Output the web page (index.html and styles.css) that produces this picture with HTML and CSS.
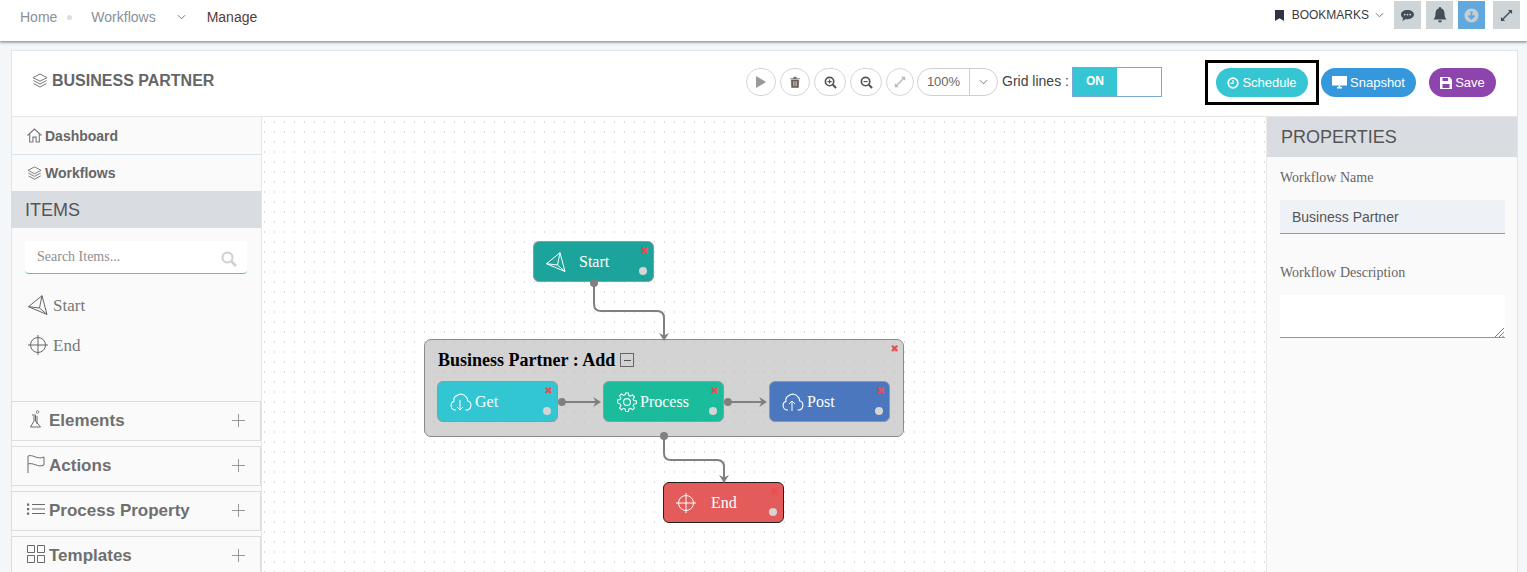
FILE: index.html
```html
<!DOCTYPE html>
<html lang="en">
<head>
<meta charset="utf-8">
<title>Business Partner</title>
<link rel="stylesheet" href="styles.css">
</head>
<body>
<svg class="defs" width="0" height="0">
  <defs>
    <symbol id="layers" viewBox="0 0 16 16"><path d="M8 1 15 4.6 8 8.2 1 4.6ZM1.500 7.600 8 11 14.500 7.600M1.500 10.600 8 14 14.500 10.600" fill="none" stroke="currentColor" stroke-width="1"/></symbol>
    <symbol id="plane" viewBox="0 0 20 20"><path d="M.5 11.700 14 .7 19 19.500ZM.5 11.700 11.500 13 19 19.500M11.500 13 14 .7" fill="none" stroke="currentColor" stroke-width="1"/></symbol>
    <symbol id="target" viewBox="0 0 20 20"><circle cx="10" cy="10" r="7.500" fill="none" stroke="currentColor"/><path d="M10 0V20M0 10H20" stroke="currentColor" fill="none"/></symbol>
    <symbol id="cloud" viewBox="0 0 22 20"><path d="M6 18H5.500A4.500 4.500 0 0 1 4 9.300 5 5 0 0 1 7 3.500 6 6 0 0 1 16 5a4 4 0 0 1 1.500 3.800A4.700 4.700 0 0 1 16 18h-.5" fill="none" stroke="currentColor" stroke-width="1.100"/></symbol>
  </defs>
</svg>

<header class="topbar">
  <nav class="crumbs">
    <a class="crumb">Home</a><span class="dot"></span>
    <a class="crumb">Workflows</a>
    <svg class="chev" viewBox="0 0 10 6"><path d="M1 1 5 5 9 1" fill="none" stroke="currentColor"/></svg>
    <a class="crumb active">Manage</a>
  </nav>
  <div class="top-tools">
    <svg class="bookmark" viewBox="0 0 10 12"><path d="M0 0H10V12L5 9 0 12Z" fill="currentColor"/></svg>
    <span class="bm-label">BOOKMARKS</span>
    <svg class="chev bm-chev" viewBox="0 0 10 6"><path d="M1 1 5 5 9 1" fill="none" stroke="currentColor"/></svg>
    <button class="tile"><svg viewBox="0 0 16 14" width="15" height="13"><path d="M8 1C3.800 1 1 3.300 1 6c0 1.500.8 2.800 2.200 3.700L2.500 13l3.700-2.200c.6.100 1.200.2 1.800.2 4.200 0 7-2.300 7-5S12.200 1 8 1Z" fill="#454e55"/><circle cx="5" cy="6" r="1" fill="#cdd5d8"/><circle cx="8" cy="6" r="1" fill="#cdd5d8"/><circle cx="11" cy="6" r="1" fill="#cdd5d8"/></svg></button>
    <button class="tile"><svg viewBox="0 0 14 16" width="14" height="16"><path d="M7 0a1 1 0 0 1 1 1.200C10.500 1.800 11.500 4 11.500 6.500c0 3 .9 4.700 2.200 6H.3c1.300-1.300 2.200-3 2.200-6C2.500 4 3.500 1.800 6 1.200A1 1 0 0 1 7 0ZM5 13.500h4a2 2 0 0 1-4 0Z" fill="#454e55"/></svg></button>
    <button class="tile tile-blue"><svg viewBox="0 0 16 16" width="15" height="15"><circle cx="8" cy="8" r="7.500" fill="#c3ced6"/><path d="M8 3.500V11M4.800 8 8 11.300 11.200 8" fill="none" stroke="#62a8dd" stroke-width="2"/></svg></button>
    <button class="tile"><svg viewBox="0 0 14 14" width="13" height="13"><path d="M8.500 1H13V5.500L11.300 3.800 3.800 11.300 5.500 13H1V8.500L2.700 10.200 10.200 2.700Z" fill="#454e55"/></svg></button>
  </div>
</header>

<main class="card">
  <section class="head">
    <h1 class="title"><svg class="title-ico"><use href="#layers"/></svg>BUSINESS PARTNER</h1>
    <div class="toolbar">
      <button class="round"><svg viewBox="0 0 10 12" width="10" height="12"><path d="M0 0 10 6 0 12Z" fill="#999"/></svg></button>
      <button class="round"><svg viewBox="0 0 12 13" width="10" height="12"><path d="M0 2.500H12M4 2.500 4.700.7H7.300L8 2.500M1.500 4H10.500L10 13H2Z" fill="#6a5e5a" stroke="#6a5e5a" stroke-width=".8"/><path d="M4.300 5.500V11.500M6 5.500V11.500M7.700 5.500V11.500" stroke="#eee" stroke-width=".7"/></svg></button>
      <button class="round wide"><svg viewBox="0 0 14 14" width="13" height="13"><circle cx="6" cy="6" r="4.500" fill="none" stroke="#5a5350" stroke-width="1.800"/><path d="M9.500 9.500 13 13" stroke="#5a5350" stroke-width="2.200"/><path d="M3.800 6H8.200M6 3.800V8.200" stroke="#5a5350" stroke-width="1.200"/></svg></button>
      <button class="round wide"><svg viewBox="0 0 14 14" width="13" height="13"><circle cx="6" cy="6" r="4.500" fill="none" stroke="#5a5350" stroke-width="1.800"/><path d="M9.500 9.500 13 13" stroke="#5a5350" stroke-width="2.200"/><path d="M3.800 6H8.200" stroke="#5a5350" stroke-width="1.200"/></svg></button>
      <button class="round narrow"><svg viewBox="0 0 14 14" width="12" height="12"><path d="M8.500 1H13V5.500L11.300 3.800 3.800 11.300 5.500 13H1V8.500L2.700 10.200 10.200 2.700Z" fill="#b5b5b5"/></svg></button>
      <div class="zoom"><span class="zoom-val">100%</span><span class="zoom-arrow"><svg class="chev" viewBox="0 0 10 6"><path d="M1 1 5 5 9 1" fill="none" stroke="currentColor"/></svg></span></div>
      <span class="grid-label">Grid lines :</span>
      <div class="switch"><span class="switch-on">ON</span></div>
    </div>
    <div class="actions">
      <div class="highlight"><button class="pill pill-teal"><svg viewBox="0 0 12 12" width="12" height="12"><circle cx="6" cy="6" r="4.800" fill="none" stroke="#fff" stroke-width="1.800"/><path d="M6 3V6.300H3.500" fill="none" stroke="#fff" stroke-width="1.200"/></svg>Schedule</button></div>
      <button class="pill pill-blue"><svg viewBox="0 0 15 13" width="15" height="13"><path d="M0 0H15V9.500H0ZM5 11H10V12.500H5Z" fill="#fff"/><path d="M6.500 9.500H8.500V11H6.500Z" fill="#fff"/></svg>Snapshot</button>
      <button class="pill pill-purple"><svg viewBox="0 0 12 12" width="12" height="12"><path d="M0 0H9.500L12 2.500V12H0Z" fill="#fff"/><path d="M2.500 1H8V4H2.500ZM2.500 7H9.500V11H2.500Z" fill="#8e44ad"/></svg>Save</button>
    </div>
  </section>

  <section class="body">
    <aside class="left">
      <a class="side-link"><svg viewBox="0 0 14 14" class="side-ico"><path d="M.5 7 7 1 13.500 7M2.500 5.500V13H5.500V8.500H8.500V13H11.500V5.500" fill="none" stroke="currentColor"/></svg>Dashboard</a>
      <a class="side-link"><svg class="side-ico"><use href="#layers"/></svg>Workflows</a>
      <h2 class="band band-items">ITEMS</h2>
      <div class="search">
        <span class="search-ph">Search Items...</span>
        <svg viewBox="0 0 16 16" width="16" height="16"><circle cx="6.500" cy="6.500" r="5" fill="none" stroke="#cfcfcf" stroke-width="2"/><path d="M10.500 10.500 15 15" stroke="#cfcfcf" stroke-width="2.500"/></svg>
      </div>
      <div class="item"><svg class="item-ico"><use href="#plane"/></svg>Start</div>
      <div class="item"><svg class="item-ico"><use href="#target"/></svg>End</div>
      <div class="spacer"></div>
      <div class="acc"><svg class="acc-ico" viewBox="0 0 14 18"><circle cx="8.500" cy="2" r="1.300" fill="none" stroke="currentColor" stroke-width=".8"/><path d="M3 5H6.500V11L11.500 17H1.500L5 11V6M8 6V14" fill="none" stroke="currentColor"/></svg><span>Elements</span><svg class="plus" viewBox="0 0 13 13"><path d="M6.500 0V13M0 6.500H13" stroke="currentColor" fill="none"/></svg></div>
      <div class="acc"><svg class="acc-ico" viewBox="0 0 18 18"><path d="M1 18V1C6 -1 10 5 17 2V10C11 13 6 7 1 9" fill="none" stroke="currentColor"/></svg><span>Actions</span><svg class="plus" viewBox="0 0 13 13"><path d="M6.500 0V13M0 6.500H13" stroke="currentColor" fill="none"/></svg></div>
      <div class="acc"><svg class="acc-ico" viewBox="0 0 18 14"><path d="M5 2.500H18M5 7H18M5 11.500H18" stroke="currentColor" fill="none"/><path d="M0 1.500H2.200V3.700H0ZM0 6H2.200V8.200H0ZM0 10.500H2.200V12.700H0Z" fill="currentColor"/></svg><span>Process Property</span><svg class="plus" viewBox="0 0 13 13"><path d="M6.500 0V13M0 6.500H13" stroke="currentColor" fill="none"/></svg></div>
      <div class="acc"><svg class="acc-ico" viewBox="0 0 18 18"><path d="M.5.500H7.500V7.500H.5ZM10.500.500H17.500V7.500H10.500ZM.5 10.500H7.500V17.500H.5ZM10.500 10.500H17.500V17.500H10.500Z" fill="none" stroke="currentColor"/></svg><span>Templates</span><svg class="plus" viewBox="0 0 13 13"><path d="M6.500 0V13M0 6.500H13" stroke="currentColor" fill="none"/></svg></div>
    </aside>

    <div class="canvas">
      <svg class="wires" width="1004" height="456" viewBox="0 0 1004 456">
        <g fill="none" stroke="#808080" stroke-width="2">
          <path d="M332 166V187Q332 194 339 194H395Q402 194 402 201V222"/>
          <path d="M402 319V336Q402 343 409 343H455Q462 343 462 350V364"/>
        </g>
        <g fill="#808080"><circle cx="332" cy="166" r="4"/><circle cx="402" cy="319" r="4"/>
          <path d="M402 224 397 216 402 218.500 407 216ZM462 366 457 358 462 360.500 467 358Z"/></g>
      </svg>

      <div class="node node-start"><svg class="node-ico"><use href="#plane"/></svg><span>Start</span><i class="x">✖</i><b class="port"></b></div>

      <div class="group">
        <i class="x">✖</i>
        <div class="group-title">Business Partner : Add<span class="collapse"></span></div>
        <div class="group-row">
          <div class="node node-get"><svg class="node-ico cloud"><use href="#cloud"/></svg><svg class="cloud-arrow" viewBox="0 0 8 11"><path d="M4 0V10M1 7 4 10 7 7" fill="none" stroke="#fff"/></svg><span>Get</span><i class="x">✖</i><b class="port"></b></div>
          <div class="link"><svg width="46" height="10" viewBox="0 0 46 10"><circle cx="4" cy="5" r="4" fill="#808080"/><path d="M4 5H40" stroke="#808080" stroke-width="2"/><path d="M44 5 36 0 38.500 5 36 10Z" fill="#808080"/></svg></div>
          <div class="node node-process"><svg class="node-ico gear" viewBox="0 0 20 20"><path d="M8.500 1h3l.5 2.700 1.600.7 2.300-1.500 2.100 2.100-1.500 2.300.7 1.600 2.800.5v3l-2.800.5-.7 1.600 1.500 2.300-2.100 2.100-2.300-1.500-1.600.7-.5 2.700h-3l-.5-2.700-1.600-.7-2.300 1.500-2.100-2.100 1.500-2.300-.7-1.600L0 11.500v-3l2.800-.5.7-1.600L2 4.100 4.100 2l2.300 1.500L8 2.800Z" transform="translate(1.500 1) scale(.85)" fill="none" stroke="#fff" stroke-width="1.100"/><circle cx="10" cy="10" r="3.100" fill="none" stroke="#fff"/></svg><span>Process</span><i class="x">✖</i><b class="port"></b></div>
          <div class="link"><svg width="46" height="10" viewBox="0 0 46 10"><circle cx="4" cy="5" r="4" fill="#808080"/><path d="M4 5H40" stroke="#808080" stroke-width="2"/><path d="M44 5 36 0 38.500 5 36 10Z" fill="#808080"/></svg></div>
          <div class="node node-post"><svg class="node-ico cloud"><use href="#cloud"/></svg><svg class="cloud-arrow" viewBox="0 0 8 11"><path d="M4 11V1M1 4 4 1 7 4" fill="none" stroke="#fff"/></svg><span>Post</span><i class="x">✖</i><b class="port"></b></div>
        </div>
      </div>

      <div class="node node-end"><svg class="node-ico"><use href="#target"/></svg><span>End</span><i class="x">✖</i><b class="port"></b></div>
    </div>

    <aside class="right">
      <h2 class="band band-props">PROPERTIES</h2>
      <div class="fields">
        <label class="field-label">Workflow Name</label>
        <div class="input">Business Partner</div>
        <label class="field-label field-second">Workflow Description</label>
        <div class="textarea"><svg class="grip" viewBox="0 0 9 9"><path d="M0 9 9 0M4 9 9 4M7.500 9 9 7.500" stroke="#555" fill="none" stroke-width=".8"/></svg></div>
      </div>
    </aside>
  </section>
</main>
</body>
</html>
```

FILE: styles.css
```css
* { box-sizing: border-box; }
html, body { margin: 0; height: 572px; overflow: hidden; }
body { background: #f3f7f9; font-family: "Liberation Sans", Arial, sans-serif; color: #555; }
.defs { position: absolute; }
button { border: 0; padding: 0; font: inherit; }

.topbar { height: 41px; background: #fff; box-shadow: 0 1px 2px #8b9296, 0 2px 3px #c5c9cc; display: flex; justify-content: space-between; align-items: center; position: relative; z-index: 2; }
.crumbs { display: flex; align-items: center; padding-left: 20px; font-size: 14px; padding-bottom: 7px; }
.crumb { color: #8a8f98; }
.crumb.active { color: #5a3a3a; margin-left: 21px; }
.dot { width: 5px; height: 5px; border-radius: 50%; background: #dcdcdc; margin: 0 19px 0 10px; }
.chev { width: 9px; height: 6px; color: #666; }
.crumbs .chev { margin-left: 21px; }
.top-tools { display: flex; align-items: center; padding-right: 7px; padding-bottom: 11px; color: #333; }
.bookmark { width: 9px; height: 11px; color: #2e3440; margin-right: 8px; }
.bm-label { font-size: 12px; color: #3a3a3a; }
.bm-chev { margin: 0 10px 0 6px; }
.tile { width: 27px; height: 28px; background: #cdd5d8; margin-left: 5px; display: flex; align-items: center; justify-content: center; }
.bm-chev + .tile { margin-left: 0; }
.tile-blue { background: #62a8dd; }
.tile:last-child { margin-left: 8px; }

.card { position: absolute; left: 11px; top: 50px; width: 1507px; height: 522px; background: #fff; border: 1px solid #e2e5e8; border-bottom: 0; display: flex; flex-direction: column; }
.head { height: 65px; flex: none; display: flex; align-items: flex-start; background: #fff; }
.title { width: 734px; margin: 21px 0 0 20px; font-size: 16px; line-height: 18px; font-weight: 700; color: #666; display: flex; align-items: center; flex: none; }
.title-ico { width: 16px; height: 16px; margin-right: 4px; color: #777; }
.toolbar { display: flex; align-items: center; margin-top: 16px; width: 420px; flex: none; margin-left: -20px; }
.round { width: 30px; height: 28px; border-radius: 14px; background: #fff; border: 1px solid #d5d5d5; display: flex; align-items: center; justify-content: center; margin-right: 4px; flex: none; }
.round.wide { width: 32px; }
.round.narrow { width: 28px; }
.zoom { display: flex; height: 28px; border: 1px solid #cfcfcf; border-radius: 14px; width: 81px; margin-left: -1px; flex: none; }
.zoom-val { width: 52px; text-align: center; font-size: 13px; line-height: 26px; color: #666; border-right: 1px solid #cfcfcf; }
.zoom-arrow { flex: 1; display: flex; align-items: center; justify-content: center; }
.grid-label { font-size: 14px; color: #444; margin: 0 0 2px 4px; white-space: nowrap; }
.switch { width: 90px; height: 30px; margin-left: 3px; border: 1px solid #7ba9d6; background: #fff; flex: none; }
.switch-on { display: block; width: 44px; height: 28px; background: #36c6d3; color: #fff; text-align: center; font-size: 12px; line-height: 27px; font-weight: 700; }
.actions { display: flex; align-items: center; margin-top: 9px; margin-left: 39px; }
.highlight { width: 114px; height: 45px; border: 3px solid #000; display: flex; align-items: center; justify-content: center; flex: none; }
.pill { height: 29px; border-radius: 15px; color: #fff; font-size: 13px; display: flex; align-items: center; justify-content: center; gap: 3px; flex: none; }
.pill-teal { width: 92px; background: #36c6d3; }
.pill-blue { width: 95px; background: #3598dc; margin-left: 2px; }
.pill-purple { width: 67px; background: #8e44ad; margin-left: 13px; }

.body { flex: 1; display: flex; min-height: 0; border-top: 1px solid #e6e6e6; }
.left { width: 250px; flex: none; background: #fafafa; display: flex; flex-direction: column; border-right: 1px solid #e6e6e6; }
.left > * { flex: none; }
.side-link { height: 38px; display: flex; align-items: center; padding-left: 15px; font-size: 14px; font-weight: 700; color: #666; border-bottom: 1px solid #d6e6ec; }
.side-link:nth-child(2) { height: 36px; border: 0; }
.side-ico { width: 15px; height: 15px; margin-right: 3px; color: #777; flex: none; }
.band { margin: 0; background: #d9dce0; font-weight: 400; color: #555; }
.band-items { height: 37px; padding-left: 14px; font-size: 18px; line-height: 39px; margin: 0 0 0 -1px; }
.search { margin: 13px 14px 0 13px; height: 33px; background: #fff; border-radius: 4px; border-bottom: 1px solid #4fc3d3; display: flex; justify-content: space-between; align-items: center; padding: 0 10px 0 12px; }
.search-ph { font-family: "Liberation Serif", serif; font-size: 14px; color: #8f8f8f; }
.search svg { margin-top: 3px; }
.item { display: flex; align-items: center; font-family: "Liberation Serif", serif; font-size: 17px; color: #777; height: 20px; padding-top: 2px; margin: 21px 0 0 16px; }
.item + .item { margin-top: 20px; }
.item-ico { width: 20px; height: 20px; margin: 0 5px 2px 0; color: #666; flex: none; }
.spacer { height: 46px; }
.acc { height: 40px; margin: 0 0 5px -1px; border: 1px solid #dcdcdc; display: flex; align-items: center; font-size: 17px; font-weight: 700; color: #6f6f6f; padding: 0 15px 1px 15px; }
.acc span { flex: 1; margin-left: 4px; }
.acc-ico { width: 18px; height: 18px; margin-bottom: 4px; color: #6a6a6a; flex: none; }
.plus { width: 13px; height: 13px; color: #999; flex: none; }

.canvas { position: relative; flex: 1; min-width: 0; overflow: hidden; background-color: #fff; background-image: url("data:image/svg+xml,%3Csvg xmlns='http://www.w3.org/2000/svg' width='10' height='10'%3E%3Crect x='2' y='4' width='1' height='2' fill='%23dcdcdc'/%3E%3C/svg%3E"); background-size: 10px 10px; border-right: 1px solid #efe8e8; }
.wires { position: absolute; left: 0; top: 0; z-index: 3; }
.node { width: 121px; height: 41px; border-radius: 6px; border: 1px solid #8f9a9c; color: #fff; font-family: "Liberation Serif", serif; font-size: 16px; font-weight: 400; display: flex; align-items: center; position: relative; flex: none; }
.node span { margin-left: 3px; }
.node-ico { width: 20px; height: 20px; color: #fff; margin-left: 12px; flex: none; }
.x { position: absolute; right: 4px; top: 4px; color: #f04a50; font-style: normal; font-size: 10px; line-height: 10px; font-family: "DejaVu Sans", sans-serif; }
.port { position: absolute; right: 6px; bottom: 6px; width: 8px; height: 8px; border-radius: 50%; background: #d5d5d5; }
.node-start { position: absolute; left: 271px; top: 124px; background: #1ba39c; }
.node-start span { margin-left: 13px; }
.node-end { position: absolute; left: 401px; top: 365px; background: #e35b5a; border-color: #222; }
.node-end span { margin-left: 15px; }
.group { position: absolute; left: 162px; top: 222px; width: 480px; height: 98px; border-radius: 7px; border: 1px solid #8a8a8a; background: rgba(190, 190, 190, .68); padding: 0 12px; }
.group > .x { right: 4px; top: 4px; }
.group-title { font-family: "Liberation Serif", serif; font-size: 18px; line-height: 20px; font-weight: 700; color: #000; margin: 10px 0 0 1px; display: flex; align-items: center; }
.collapse { width: 14px; height: 14px; margin-left: 5px; border: 1px solid #666; background: linear-gradient(#555, #555) center / 7px 1px no-repeat; }
.group-row { display: flex; align-items: center; margin-top: 11px; }
.link { width: 45px; flex: none; display: flex; overflow: visible; }
.node-get { background: #32c5d2; }
.node-process { background: #1bbc9b; }
.node-post { background: #4b77be; }
.cloud { width: 22px; height: 20px; }
.cloud-arrow { width: 8px; height: 11px; position: absolute; left: 18px; top: 18px; }
.gear { width: 22px; height: 22px; margin-left: 12px; }
.node-process span { margin-left: 2px; }

.right { width: 250px; flex: none; background: #fafafa; }
.band-props { height: 40px; padding-left: 14px; font-size: 18px; line-height: 40px; }
.fields { padding: 13px 12px 0 13px; }
.field-label { display: block; font-family: "Liberation Serif", serif; font-size: 14px; line-height: 16px; color: #666; }
.input { margin-top: 14px; height: 34px; background: #eef1f5; border-bottom: 1px solid #27c4d6; padding-left: 12px; font-size: 14px; line-height: 35px; color: #555; }
.field-second { margin-top: 31px; }
.textarea { margin-top: 14px; height: 43px; background: #fff; border-bottom: 1px solid #27c4d6; position: relative; }
.grip { position: absolute; right: 1px; bottom: 0; width: 9px; height: 9px; }
```
